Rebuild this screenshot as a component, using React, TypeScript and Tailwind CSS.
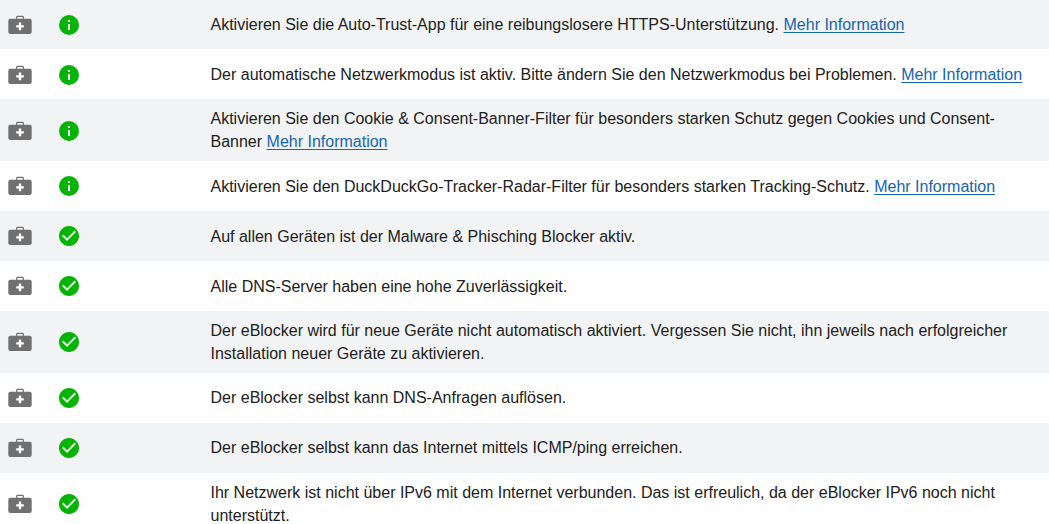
import { MdCheckCircle } from "react-icons/md"

type Check = {
  status: "info" | "ok"
  text: string
  more?: boolean
  height: string
}

const single = "h-[49.9px]"
const double = "h-[61.9px]"

const checks: Check[] = [
  { status: "info", text: "Aktivieren Sie die Auto-Trust-App für eine reibungslosere HTTPS-Unterstützung.", more: true, height: "h-[49.45px]" },
  { status: "info", text: "Der automatische Netzwerkmodus ist aktiv. Bitte ändern Sie den Netzwerkmodus bei Problemen.", more: true, height: single },
  { status: "info", text: "Aktivieren Sie den Cookie & Consent-Banner-Filter für besonders starken Schutz gegen Cookies und Consent-Banner", more: true, height: double },
  { status: "info", text: "Aktivieren Sie den DuckDuckGo-Tracker-Radar-Filter für besonders starken Tracking-Schutz.", more: true, height: single },
  { status: "ok", text: "Auf allen Geräten ist der Malware & Phisching Blocker aktiv.", height: single },
  { status: "ok", text: "Alle DNS-Server haben eine hohe Zuverlässigkeit.", height: single },
  { status: "ok", text: "Der eBlocker wird für neue Geräte nicht automatisch aktiviert. Vergessen Sie nicht, ihn jeweils nach erfolgreicher Installation neuer Geräte zu aktivieren.", height: double },
  { status: "ok", text: "Der eBlocker selbst kann DNS-Anfragen auflösen.", height: single },
  { status: "ok", text: "Der eBlocker selbst kann das Internet mittels ICMP/ping erreichen.", height: single },
  { status: "ok", text: "Ihr Netzwerk ist nicht über IPv6 mit dem Internet verbunden. Das ist erfreulich, da der eBlocker IPv6 noch nicht unterstützt.", height: double },
]

function DoctorIcon() {
  return (
    <svg viewBox="0 0 24 20" className="h-5 w-6">
      <path d="M8.700 4V2.100q0-.8.8-.8h5q.8 0 .8.8V4" fill="none" stroke="#707070" strokeWidth="1.200" />
      <rect x="0.300" y="3.800" width="23.400" height="15.300" rx="2" fill="#707070" />
      <path fill="#fff" d="M10.800 7.500h2.400v2.700h2.600v2.300h-2.600v2.700h-2.400v-2.700H8.200v-2.300h2.600z" />
    </svg>
  )
}

function InfoIcon() {
  return (
    <svg viewBox="0 0 24 24" className="size-6">
      <circle cx="12" cy="12" r="10" fill="#04b404" />
      <path fill="#fff" d="M11 7h2v2h-2zM11 11h2v6h-2z" />
    </svg>
  )
}

function OkIcon() {
  return (
    <span className="relative flex size-6 items-center justify-center">
      <span className="absolute size-4 rounded-full bg-[#e3f7e3]" />
      <MdCheckCircle className="relative size-6 text-[#04b404]" />
    </span>
  )
}

export default function App() {
  return (
    <div className="h-[524px] w-[1049px] overflow-hidden bg-[#fefefe] font-['Liberation_Sans',Arial,sans-serif] text-base leading-[23px] text-[#212121]">
      {checks.map((check) => (
        <div key={check.text} className={`flex items-center odd:bg-[#f2f3f5] ${check.height}`}>
          <div className="mt-[0.5px] ml-2 w-[49px]">
            <DoctorIcon />
          </div>
          <div className="mt-[0.5px] w-[153.5px]">{check.status === "info" ? <InfoIcon /> : <OkIcon />}</div>
          <p className="mt-[0.25px] w-[820px]">
            {check.text}
            {check.more && (
              <>
                {" "}
                <a href="#" className="text-[#1665b0] underline decoration-1 underline-offset-2">
                  Mehr Information
                </a>
              </>
            )}
          </p>
        </div>
      ))}
    </div>
  )
}
